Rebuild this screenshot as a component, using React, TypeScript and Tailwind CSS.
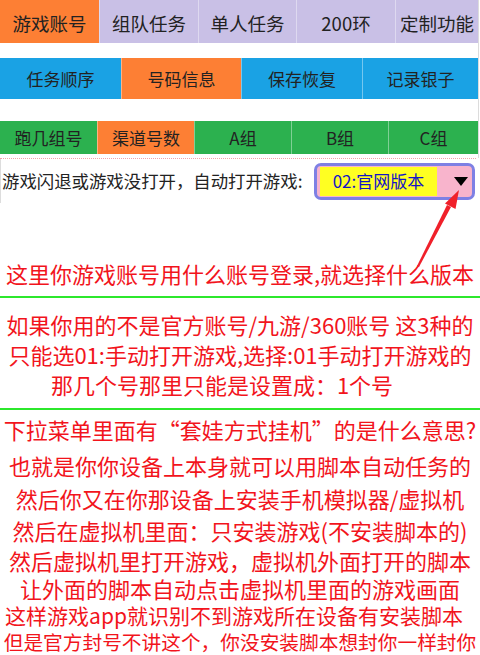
import React from "react";

const tabBase =
  "flex items-center justify-center text-[#222] shrink-0 border-l border-white/40 first:border-l-0";

export default function App() {
  const row1 = [
    { t: "游戏账号", c: "bg-[#fd7f34]", w: "w-[99px]" },
    { t: "组队任务", c: "bg-[#c9c0e6]", w: "w-[99px]" },
    { t: "单人任务", c: "bg-[#c9c0e6]", w: "w-[98px]" },
    { t: "200环", c: "bg-[#c9c0e6]", w: "w-[99px]" },
    { t: "定制功能", c: "bg-[#c9c0e6]", w: "flex-1" },
  ];
  const row2 = [
    { t: "任务顺序", c: "bg-[#1aa2e4]", w: "w-[121px]" },
    { t: "号码信息", c: "bg-[#fd7f34]", w: "w-[120px]" },
    { t: "保存恢复", c: "bg-[#1aa2e4]", w: "w-[121px]" },
    { t: "记录银子", c: "bg-[#1aa2e4]", w: "flex-1" },
  ];
  const row3 = [
    { t: "跑几组号", c: "bg-[#2cb14f]", w: "w-[97px]" },
    { t: "渠道号数", c: "bg-[#fd7f34]", w: "w-[97px]" },
    { t: "A组", c: "bg-[#2cb14f]", w: "w-[97px]" },
    { t: "B组", c: "bg-[#2cb14f]", w: "w-[97px]" },
    { t: "C组", c: "bg-[#2cb14f]", w: "flex-1" },
  ];
  const red = "text-[#f2141c] text-center whitespace-nowrap";
  const line = `${red} flex items-center justify-center leading-none`;
  return (
    <div className="relative w-[480px] h-[655px] overflow-hidden bg-white font-['Noto_Sans_CJK_SC','Noto_Sans',sans-serif]">
      <div className="w-[479px] border-r border-[#dcdcdc]">
        <div className="flex h-[43px] text-[18.5px]">
          {row1.map((r) => (
            <div key={r.t} className={`${tabBase} ${r.c} ${r.w} pt-[4px]`}>
              {r.t}
            </div>
          ))}
        </div>
        <div className="flex h-[41px] mt-[15px] text-[17px]">
          {row2.map((r) => (
            <div key={r.t} className={`${tabBase} ${r.c} ${r.w}`}>
              {r.t}
            </div>
          ))}
        </div>
        <div className="flex h-[33px] mt-[22px] text-[17px]">
          {row3.map((r) => (
            <div key={r.t} className={`${tabBase} ${r.c} ${r.w}`}>
              {r.t}
            </div>
          ))}
        </div>
        <div className="h-[4px]" />
      </div>
      <div className="w-[476px] border-t border-dotted border-[#f3a3ab]" />
      <div className="flex items-center justify-between h-[44px] w-[478px] border-l border-[#dddddd] pl-[1px]">
        <span className="text-[17.4px] text-[#222] whitespace-nowrap">游戏闪退或游戏没打开，自动打开游戏:</span>
        <div className="flex items-center w-[161px] h-[37px] mr-[3px] rounded-[7px] border-[3px] border-[#7e80e4] bg-[#f8b4cc]">
          <div className="ml-[3px] w-[117px] h-[29px] bg-[#ffff22] flex items-center justify-center text-[17px] text-[#1414c8]">
            02:官网版本
          </div>
          <div className="flex-1 flex justify-center">
            <div className="w-0 h-0 border-l-[7px] border-r-[7px] border-t-[9px] border-l-transparent border-r-transparent border-t-black ml-[12px]" />
          </div>
        </div>
      </div>
      <div className="pt-[57px] pb-[10px]">
        <div className={`${red} text-[22px] leading-[26px]`}>这里你游戏账号用什么账号登录,就选择什么版本</div>
      </div>
      <div className="h-[2px] bg-[#2ce82c]" />
      <div className="pt-[11px] pb-[9px] text-[22px] leading-[30px]">
        <div className={red}>如果你用的不是官方账号/九游/360账号 这3种的</div>
        <div className={red}>只能选01:手动打开游戏,选择:01手动打开游戏的</div>
        <div className={`${red} pr-[36px]`}>那几个号那里只能是设置成：1个号</div>
      </div>
      <div className="h-[2px] bg-[#2ce82c]" />
      <div className="text-[22px]">
        <div className={`${line} h-[38px]`}>下拉菜单里面有“套娃方式挂机”的是什么意思?</div>
        <div className={`${line} h-[33px]`}>也就是你你设备上本身就可以用脚本自动任务的</div>
        <div className={`${line} h-[33px]`}>然后你又在你那设备上安装手机模拟器/虚拟机</div>
        <div className={`${line} h-[31px]`}>然后在虚拟机里面：只安装游戏(不安装脚本的)</div>
        <div className={`${line} h-[29px]`}>然后虚拟机里打开游戏，虚拟机外面打开的脚本</div>
        <div className={`${line} h-[28px]`}>让外面的脚本自动点击虚拟机里面的游戏画面</div>
        <div className={`${line} h-[27px] text-[21px] pr-[12px]`}>这样游戏app就识别不到游戏所在设备有安装脚本</div>
        <div className={`${line} h-[26px] text-[19.7px]`}>但是官方封号不讲这个，你没安装脚本想封你一样封你</div>
      </div>
      <svg className="absolute left-0 top-0 pointer-events-none" width="480" height="655" viewBox="0 0 480 655">
        <polygon points="417,266 419,267 451,207 447,205" fill="#f0202a" />
        <polygon points="459,190 455.5,209 445,203.5" fill="#f0202a" />
      </svg>
    </div>
  );
}
